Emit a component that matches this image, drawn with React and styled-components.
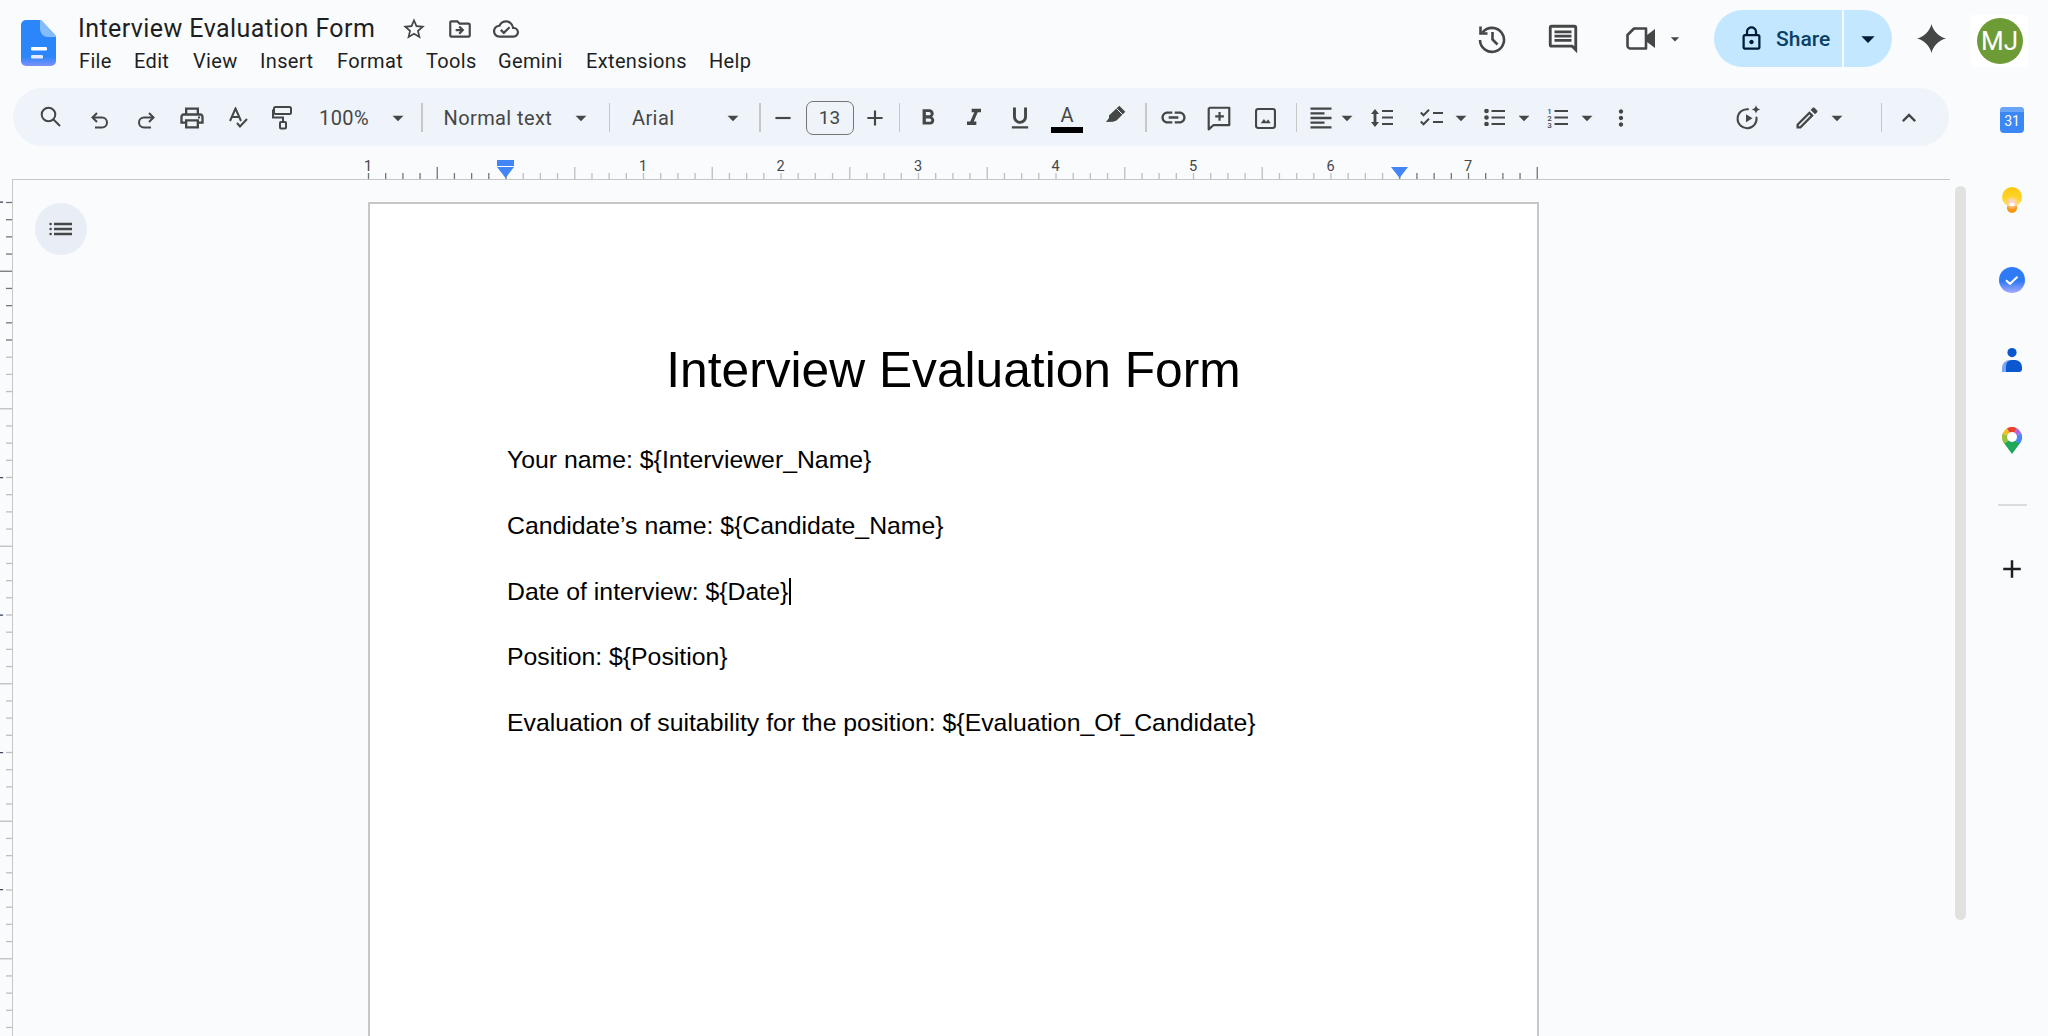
import React from "react";
import styled, { createGlobalStyle } from "styled-components";
import {
  MdOutlinePrint, MdArrowDropDown, MdRemove, MdAdd,
  MdFormatBold, MdFormatItalic, MdFormatUnderlined, MdInsertLink, MdFormatAlignLeft, MdMoreVert,
  MdOutlineEdit, MdExpandLess, MdStarBorder, MdOutlineDriveFileMove, MdOutlineCloudDone, MdOutlineLock,
} from "react-icons/md";

const Global = createGlobalStyle`
  html, body { margin: 0; padding: 0; background: #f9fbfd; height: 100%; overflow: hidden; }
  #root { height: 100%; }
  * { box-sizing: border-box; }
`;

const Shell = styled.div`
  width: 2048px; height: 1036px; overflow: hidden; background: #f9fbfd; display: flex; flex-direction: column;
  font-family: Roboto, "Liberation Sans", sans-serif; color: #1f1f1f;
`;
const Header = styled.header`
  height: 88px; flex: none; display: flex; align-items: flex-start; padding: 0 20px 0 21px;
`;
const DocLogo = styled.svg` margin-top: 20px; flex: none; `;
const TitleColumn = styled.div` margin-left: 22px; padding-top: 15px; display: flex; flex-direction: column; `;
const TitleRow = styled.div` height: 28px; display: flex; align-items: center; `;
const DocTitle = styled.div` font-size: 25px; line-height: 28px; letter-spacing: 0.42px; width: 313px; white-space: nowrap; `;
const TitleIcon = styled.span`
  width: 46px; height: 28px; display: flex; align-items: center; justify-content: center; color: #444746; font-size: 26px;
`;
const MenuBar = styled.nav` display: flex; margin-top: 5px; height: 26px; margin-left: 1px; `;
const MenuItem = styled.span` font-size: 20px; letter-spacing: 0.35px; line-height: 26px; width: ${(p) => p.$w}px; white-space: nowrap; `;
const HeaderRight = styled.div` margin-left: auto; display: flex; align-items: center; height: 77px; `;
const HeadIcon = styled.span`
  width: ${(p) => p.$w || 40}px; margin-left: ${(p) => p.$ml || 0}px; display: flex; align-items: center; justify-content: center;
  color: #444746; font-size: 34px;
`;
const Share = styled.div`
  margin-left: 29px; width: 178px; height: 57px; border-radius: 29px; background: #c2e7ff; display: flex; align-items: stretch; overflow: hidden;
`;
const ShareMain = styled.div`
  width: 130px; display: flex; align-items: center; padding-left: 24px; gap: 11px; color: #0a3f66; font-size: 21px; font-weight: 500;
  border-right: 2px solid #f4fafe; svg { color: #001d35; }
`;
const ShareCaret = styled.div` flex: 1; display: flex; align-items: center; justify-content: center; color: #001d35; font-size: 32px; `;
const AvatarBox = styled.div`
  margin: 5px 0 0 25px; width: 57px; height: 52px; background: #fff; display: flex; align-items: center; justify-content: center;
`;
const Avatar = styled.div`
  width: 46px; height: 46px; border-radius: 50%; background: #6d9c36; color: #fff; font-size: 26px;
  display: flex; align-items: center; justify-content: center;
`;
const Body = styled.div` flex: 1; display: flex; min-height: 0; `;
const Main = styled.main` width: 1950px; flex: none; display: flex; flex-direction: column; min-height: 0; `;
const Toolbar = styled.div`
  margin-left: 13px; width: 1936px; height: 58px; flex: none; border-radius: 29px; background: #eff3fa;
  display: flex; align-items: center; padding: 1px 17px 0 15px; color: #444746;
`;
const Tool = styled.span`
  flex: none; width: ${(p) => p.$w || 46}px; margin-left: ${(p) => p.$ml || 0}px; height: 40px;
  display: flex; align-items: center; justify-content: center; font-size: ${(p) => p.$s || 26}px; color: #444746;
`;
const Caret = styled(Tool)` font-size: 26px; svg { flex: none; } `;
const Glyph = styled.svg`
  flex: none; display: block; margin-top: ${(p) => p.$dy || 0}px; fill: none; stroke: #444746; stroke-width: ${(p) => p.$sw || 2}px;
`;
const Sep = styled.i`
  flex: none; display: block; width: 1.5px; height: 29px; margin-left: ${(p) => p.$ml || 0}px; background: #c7c7c7;
`;
const Label = styled.span`
  flex: none; width: ${(p) => p.$w}px; margin-left: ${(p) => p.$ml || 0}px; font-size: 20px; letter-spacing: 0.4px; color: #444746; white-space: nowrap;
`;
const SizeBox = styled.span`
  flex: none; margin-left: 1px; width: 48px; height: 34px; border: 1.5px solid #747775; border-radius: 7px;
  display: flex; align-items: center; justify-content: center; font-size: 19px; color: #444746;
`;
const ColorA = styled.span`
  flex: none; margin-left: 1px; width: 46px; height: 40px; display: flex; flex-direction: column; align-items: center; justify-content: flex-end;
  font-size: 20px; line-height: 20px; color: #444746;
  &::after { content: ""; width: 32px; height: 5.5px; background: #000; margin: 2px 0 5px; }
`;
const Spacer = styled.span` flex: 1; `;
const RulerTop = styled.svg` display: block; flex: none; `;
const Work = styled.div` flex: 1; display: flex; min-height: 0; overflow: hidden; `;
const RulerSide = styled.svg` display: block; flex: none; margin-top: 1px; `;
const Canvas = styled.div`
  flex: 1; display: flex; align-items: flex-start; border-top: 1.5px solid #c7c7c7; border-left: 1.5px solid #c7c7c7; padding-top: 22px; overflow: hidden;
`;
const OutlineBtn = styled.div`
  flex: none; margin: 1px 0 0 22px; width: 52px; height: 52px; border-radius: 50%; background: #e9eef6;
  display: flex; align-items: center; justify-content: center;
`;
const Paper = styled.article`
  flex: none; margin-left: 281px; width: 1171px; height: 900px; background: #fff; border: 2px solid #c7c7c7; padding: 137px 137px 0;
  font-family: "Liberation Sans", Arial, sans-serif; color: #000;
`;
const PaperTitle = styled.h1` margin: 0 0 28px; font-weight: 400; font-size: 49.7px; line-height: 58px; text-align: center; white-space: nowrap; `;
const Line = styled.p` margin: 0; font-size: 24.8px; line-height: 65.75px; white-space: nowrap; display: flex; align-items: center; `;
const Cursor = styled.span` display: inline-block; width: 2px; height: 27px; background: #000; margin-left: 1px; `;
const Scroll = styled.div` flex: none; margin: 98px 0 0 5px; width: 11px; height: 734px; border-radius: 6px; background: #e1e2df; `;
const Rail = styled.aside` flex: 1; display: flex; flex-direction: column; align-items: center; padding: 19px 0 0 10px; `;
const RailList = styled.div` display: flex; flex-direction: column; gap: 54px; align-items: center; `;
const RailIcon = styled.svg` display: block; `;
const RailRule = styled.hr` width: 29px; height: 1.5px; border: 0; background: #dadce0; margin: 50px 0 0; `;
const RailAdd = styled.div` margin-top: 48px; font-size: 30px; line-height: 0; color: #1f1f1f; `;

const DocIcon = () => (
  <DocLogo width="35" height="46" viewBox="0 0 35 46">
    <defs>
      <linearGradient id="dg" x1="0" y1="0" x2="0" y2="1">
        <stop offset="0.8" stopColor="#2c86fb" />
        <stop offset="1" stopColor="#7d92fa" />
      </linearGradient>
    </defs>
    <path d="M5 0H20L35 16V41a5 5 0 0 1-5 5H5a5 5 0 0 1-5-5V5a5 5 0 0 1 5-5z" fill="url(#dg)" />
    <path d="M19 0h1L35 16v1H27a8 8 0 0 1-8-8z" fill="#85bdfb" />
    <rect x="10" y="27" width="16" height="3.4" rx="1.2" fill="#fff" />
    <rect x="10" y="35" width="12" height="3.4" rx="1.2" fill="#e6e9ff" />
  </DocLogo>
);
const HistoryIcon = () => (
  <Glyph width="30" height="30" viewBox="0 0 30 30" $sw={2.6}>
    <path d="M5.5 8.5A12 12 0 1 1 3 16" />
    <path d="M3.5 2.5V9.5H10.5" />
    <path d="M15.5 8V15.5L20.5 20.5" />
  </Glyph>
);
const CommentIcon = () => (
  <svg width="34" height="34" viewBox="0 0 24 24" fill="#444746">
    <path d="M20 2H4a2 2 0 0 0-2 2v12a2 2 0 0 0 2 2h14l4 4V4a2 2 0 0 0-2-2zm0 15.2L18.8 16H4V4h16zM6 12h12v2H6zm0-3h12v2H6zm0-3h12v2H6z" />
  </svg>
);
const MeetIcon = () => (
  <svg width="30" height="23" viewBox="0 0 30 23">
    <path d="M8 1.5H20V21.5H4.5a3 3 0 0 1-3-3V8z" fill="none" stroke="#444746" strokeWidth="2.6" strokeLinejoin="round" />
    <path d="M21 8l8-6v19l-8-6z" fill="#444746" />
  </svg>
);
const Spark = () => (
  <svg width="29" height="29" viewBox="0 0 24 24" fill="#444746">
    <path d="M12 0C13.5 6 18 10.5 24 12 18 13.5 13.5 18 12 24 10.5 18 6 13.5 0 12 6 10.5 10.5 6 12 0z" />
  </svg>
);
const SearchIcon = () => (
  <Glyph width="24" height="24" viewBox="0 0 24 24" $dy={-1}>
    <circle cx="9.5" cy="9.5" r="6.8" />
    <path d="M14.5 14.5L21 21" />
  </Glyph>
);
const UndoIcon = () => (
  <Glyph width="20" height="18" viewBox="0 0 20 18" $dy={5}>
    <path d="M7 2L2.5 6.5 7 11" />
    <path d="M2.5 6.5H12a5 5 0 0 1 0 10H5" />
  </Glyph>
);
const RedoIcon = () => (
  <Glyph width="20" height="18" viewBox="0 0 20 18" $dy={5}>
    <path d="M13 2L17.5 6.5 13 11" />
    <path d="M17.5 6.5H8a5 5 0 0 0 0 10H15" />
  </Glyph>
);
const SpellIcon = () => (
  <Glyph width="19" height="21" viewBox="0 0 19 21">
    <path d="M1 14L6.5 1.5 12 14" />
    <path d="M3 10H10" />
    <path d="M8 16L11 19.5 18 12" />
  </Glyph>
);
const RollerIcon = () => (
  <Glyph width="20" height="24" viewBox="0 0 20 24">
    <rect x="2" y="1" width="17" height="7" rx="1.5" />
    <path d="M2 4.5H1V11.5H11V16" />
    <rect x="8" y="16" width="6" height="6.5" rx="1" />
  </Glyph>
);
const Highlighter = () => (
  <svg width="20" height="18" viewBox="0 0 20 18" style={{ marginTop: -8 }}>
    <path d="M13.3.7L19.3 6.7 10.5 15.5 7 16.7 0 17 3 13 3 10.5z" fill="#444746" />
    <path d="M10.5 3.5L16.5 9.5" stroke="#eff3fa" strokeWidth="1" />
  </svg>
);
const AddCommentIcon = () => (
  <Glyph width="26" height="26" viewBox="0 0 24 24">
    <path d="M3.5 2.5H21.5V18.5H7L2.5 22.5V3.5z" strokeLinejoin="round" />
    <path d="M12.5 6.5V14.5M8.5 10.5H16.5" />
  </Glyph>
);
const ImageIcon = () => (
  <Glyph width="21" height="21" viewBox="0 0 20 20" $dy={2}>
    <rect x="1" y="1" width="18" height="18" rx="2" />
    <path d="M5.5 14.5L8.5 10.5 10.5 13 12.5 11 15 14.5z" fill="#444746" stroke="none" />
  </Glyph>
);
const LineSpacingIcon = () => (
  <Glyph width="24" height="18" viewBox="0 0 24 18">
    <path d="M5 0l4 5H6.4v8H9l-4 5-4-5h2.6V5H1z" fill="#444746" stroke="none" />
    <path d="M12 2H23M12 8.5H23M12 15H23" />
  </Glyph>
);
const ChecklistIcon = () => (
  <Glyph width="23" height="18" viewBox="0 0 23 18">
    <path d="M.8 3.5L3.5 6.3 9 .8M.8 12.5L3.5 15.3 9 9.8" />
    <path d="M13 4H23M13 13H23" />
  </Glyph>
);
const BulletIcon = () => (
  <Glyph width="21" height="17" viewBox="0 0 21 17">
    <path d="M7.5 2H21M7.5 8.5H21M7.5 15H21" />
    <circle cx="2.5" cy="2" r="2.3" fill="#444746" stroke="none" />
    <circle cx="2.5" cy="8.5" r="2.3" fill="#444746" stroke="none" />
    <circle cx="2.5" cy="15" r="2.3" fill="#444746" stroke="none" />
  </Glyph>
);
const NumberIcon = () => (
  <Glyph width="21" height="21" viewBox="0 0 21 21">
    <path d="M7.5 4H21M7.5 10.5H21M7.5 17H21" />
    {[[1, 6.5], [2, 13.5], [3, 20.5]].map(([n, y]) => (
      <text key={n} x="2.5" y={y} textAnchor="middle" fontSize="8" fontFamily="Roboto" fontWeight="500" fill="#444746" stroke="none">{n}</text>
    ))}
  </Glyph>
);
const RecordIcon = () => (
  <svg width="26" height="26" viewBox="0 0 26 26" fill="none" stroke="#444746" strokeWidth="2">
    <path d="M20.5 12.5A9.5 9.5 0 1 1 12 4.2" strokeLinecap="round" />
    <path d="M10 9.2l6.5 4-6.5 4z" fill="#444746" stroke="none" />
    <path d="M20 0c.4 2.6 1.8 4 4.6 4.4C21.8 4.8 20.4 6.2 20 8.8 19.6 6.2 18.2 4.8 15.4 4.4 18.2 4 19.6 2.6 20 0z" fill="#444746" stroke="none" />
  </svg>
);
const OutlineIcon = () => (
  <Glyph width="24" height="16" viewBox="0 0 24 16" $sw={2.4}>
    <path d="M5 3H23M5 8H23M5 13H23" />
    <circle cx="1.6" cy="3" r="1.3" fill="#444746" stroke="none" />
    <circle cx="1.6" cy="8" r="1.3" fill="#444746" stroke="none" />
    <circle cx="1.6" cy="13" r="1.3" fill="#444746" stroke="none" />
  </Glyph>
);
const Calendar = () => (
  <RailIcon width="24" height="26" viewBox="0 0 24 26">
    <rect x="0" y="0" width="24" height="26" rx="4" fill="#3b87f5" />
    <path d="M0 4a4 4 0 0 1 4-4h16a4 4 0 0 1 4 4v1H0z" fill="#6aa5f8" />
    <text x="12" y="19" textAnchor="middle" fontSize="14" fontFamily="Roboto" fill="#fff">31</text>
  </RailIcon>
);
const Keep = () => (
  <RailIcon width="22" height="26" viewBox="0 0 22 26">
    <defs>
      <linearGradient id="kg" x1="0" y1="0" x2="0" y2="1"><stop offset="0" stopColor="#fdc70a" /><stop offset="1" stopColor="#ffe04a" /></linearGradient>
      <radialGradient id="kp"><stop offset="0.3" stopColor="#ffd3d8" /><stop offset="1" stopColor="#ffc9b8" stopOpacity="0" /></radialGradient>
    </defs>
    <circle cx="11" cy="10" r="10" fill="url(#kg)" />
    <path d="M6 19h10v2a5 5 0 0 1-10 0z" fill="#f59a0f" />
    <circle cx="11" cy="16" r="7" fill="url(#kp)" />
    <rect x="8.5" y="16" width="5" height="3" rx="1" fill="#fff" />
  </RailIcon>
);
const Tasks = () => (
  <RailIcon width="26" height="26" viewBox="0 0 26 26">
    <defs>
      <linearGradient id="tg" x1="0" y1="0" x2="0" y2="1"><stop offset="0.55" stopColor="#2f7bf6" /><stop offset="1" stopColor="#a9a9ff" /></linearGradient>
    </defs>
    <circle cx="13" cy="13" r="13" fill="url(#tg)" />
    <path d="M7 13.2l4 3.6 7.5-7" fill="none" stroke="#fff" strokeWidth="2" />
  </RailIcon>
);
const Contacts = () => (
  <RailIcon width="20" height="26" viewBox="0 0 20 26">
    <circle cx="10" cy="5.6" r="4.6" fill="#0b57d0" />
    <path d="M0 25v-4a8 8 0 0 1 8-8h6v12z" fill="#7aa7f5" />
    <path d="M4 25V19a6 6 0 0 1 6-6h3a7 7 0 0 1 7 7v2a3 3 0 0 1-3 3z" fill="#0b57d0" />
  </RailIcon>
);
const MapsPin = () => (
  <RailIcon width="20" height="27" viewBox="0 0 20 27">
    <path d="M1.2 15L10 27l8.8-12z" fill="#1fa85b" />
    <path d="M10 10L2.9 17.1A10 10 0 0 1 .6 6.5z" fill="#9cc23c" />
    <path d="M10 10L.6 6.5A10 10 0 0 1 5 1.3z" fill="#f6bd1b" />
    <path d="M10 10L5 1.3A10 10 0 0 1 15 1.3z" fill="#ea4335" />
    <path d="M10 10L15 1.3A10 10 0 0 1 19.4 6.5z" fill="#b065d8" />
    <path d="M10 10L19.4 6.5A10 10 0 0 1 17.1 17.1z" fill="#4a86f5" />
    <path d="M10 10L17.1 17.1 10 20 2.9 17.1z" fill="#1fa85b" />
    <circle cx="10" cy="10" r="5" fill="#fff" />
  </RailIcon>
);

const STEP = 137.5 / 8;
const topTicks = Array.from({ length: 69 }, (_, i) => i);
const TopRuler = () => (
  <RulerTop width="1950" height="33" viewBox="0 0 1950 33">
    {topTicks.map((i) => {
      const x = 368.5 + i * STEP;
      const half = i % 8 === 4;
      const inMargin = x > 510 && x < 1396;
      return <line key={i} x1={x} x2={x} y1={half ? 21 : 27} y2="33" stroke={inMargin ? "#bdbfc1" : "#70757a"} strokeWidth="1.3" />;
    })}
    {[[368, "1"], [643, "1"], [780.5, "2"], [918, "3"], [1055.5, "4"], [1193, "5"], [1330.5, "6"], [1468, "7"]].map(([x, n]) => (
      <text key={x} x={x} y="25" textAnchor="middle" fontSize="14.5" fontFamily="Roboto" fill="#444746">{n}</text>
    ))}
    <rect x="497" y="14" width="17" height="6" fill="#4285f4" />
    <path d="M497 21h17l-8.5 11z" fill="#4285f4" />
    <path d="M1391 21h17l-8.5 11z" fill="#4285f4" />
  </RulerTop>
);
const sideTicks = Array.from({ length: 50 }, (_, i) => i);
const SideRuler = () => (
  <RulerSide width="12" height="856" viewBox="0 0 12 856">
    {sideTicks.map((i) => {
      const y = 22.5 + i * STEP;
      const half = i % 8 === 4;
      return <line key={i} x1={half ? 0 : 6} x2="12" y1={y} y2={y} stroke={i <= 8 ? "#70757a" : "#bdbfc1"} strokeWidth="1.3" />;
    })}
    {[22.5, 298, 435.5, 573, 710].map((y) => (
      <text key={y} x="0" y="0" transform={`translate(3 ${y}) rotate(-90)`} textAnchor="middle" fontSize="14" fontFamily="Roboto" fill="#444746">1</text>
    ))}
  </RulerSide>
);

const menu = [["File", 55], ["Edit", 59], ["View", 67], ["Insert", 77], ["Format", 89], ["Tools", 72], ["Gemini", 88], ["Extensions", 123], ["Help", 50]];

export default function App() {
  return (
    <Shell>
      <Global />
      <Header>
        <DocIcon />
        <TitleColumn>
          <TitleRow>
            <DocTitle>Interview Evaluation Form</DocTitle>
            <TitleIcon><MdStarBorder /></TitleIcon>
            <TitleIcon><MdOutlineDriveFileMove /></TitleIcon>
            <TitleIcon><MdOutlineCloudDone /></TitleIcon>
          </TitleRow>
          <MenuBar>
            {menu.map(([m, w]) => <MenuItem key={m} $w={w}>{m}</MenuItem>)}
          </MenuBar>
        </TitleColumn>
        <HeaderRight>
          <HeadIcon><HistoryIcon /></HeadIcon>
          <HeadIcon $ml={31}><CommentIcon /></HeadIcon>
          <HeadIcon $ml={39} $w={38}><MeetIcon /></HeadIcon>
          <HeadIcon $ml={5} $w={20}><MdArrowDropDown /></HeadIcon>
          <Share>
            <ShareMain><MdOutlineLock size={27} /><span>Share</span></ShareMain>
            <ShareCaret><MdArrowDropDown /></ShareCaret>
          </Share>
          <HeadIcon $ml={25} $w={29}><Spark /></HeadIcon>
          <AvatarBox><Avatar>MJ</Avatar></AvatarBox>
        </HeaderRight>
      </Header>
      <Body>
        <Main>
          <Toolbar>
            <Tool><SearchIcon /></Tool>
            <Tool $ml={3}><UndoIcon /></Tool>
            <Tool><RedoIcon /></Tool>
            <Tool $s={28}><MdOutlinePrint /></Tool>
            <Tool><SpellIcon /></Tool>
            <Tool $w={42}><RollerIcon /></Tool>
            <Label $ml={16} $w={53}>100%</Label>
            <Caret $ml={16} $w={20}><MdArrowDropDown /></Caret>
            <Sep $ml={13} />
            <Label $ml={21} $w={110}>Normal text</Label>
            <Caret $ml={17} $w={20}><MdArrowDropDown /></Caret>
            <Sep $ml={18} />
            <Label $ml={22} $w={42}>Arial</Label>
            <Caret $ml={49} $w={20}><MdArrowDropDown /></Caret>
            <Sep $ml={16} />
            <Tool $w={44}><MdRemove /></Tool>
            <SizeBox>13</SizeBox>
            <Tool $w={42}><MdAdd /></Tool>
            <Sep $ml={3} />
            <Tool $ml={5}><MdFormatBold /></Tool>
            <Tool $s={28}><MdFormatItalic /></Tool>
            <Tool $s={28}><MdFormatUnderlined /></Tool>
            <ColorA>A</ColorA>
            <Tool $ml={3}><Highlighter /></Tool>
            <Sep $ml={6} />
            <Tool $ml={4} $s={29}><MdInsertLink /></Tool>
            <Tool $w={45}><AddCommentIcon /></Tool>
            <Tool $ml={1}><ImageIcon /></Tool>
            <Sep $ml={7} />
            <Tool $ml={4} $w={40} $s={28}><MdFormatAlignLeft /></Tool>
            <Caret $w={12}><MdArrowDropDown /></Caret>
            <Tool $ml={6}><LineSpacingIcon /></Tool>
            <Tool $ml={3}><ChecklistIcon /></Tool>
            <Caret $w={14}><MdArrowDropDown /></Caret>
            <Tool $ml={3}><BulletIcon /></Tool>
            <Caret $w={14}><MdArrowDropDown /></Caret>
            <Tool $ml={3}><NumberIcon /></Tool>
            <Caret $w={14}><MdArrowDropDown /></Caret>
            <Tool $ml={4}><MdMoreVert /></Tool>
            <Spacer />
            <Tool><RecordIcon /></Tool>
            <Tool $ml={12} $s={28}><MdOutlineEdit /></Tool>
            <Caret $w={14}><MdArrowDropDown /></Caret>
            <Sep $ml={37} />
            <Tool $ml={4} $s={28}><MdExpandLess /></Tool>
          </Toolbar>
          <TopRuler />
          <Work>
            <SideRuler />
            <Canvas>
              <OutlineBtn><OutlineIcon /></OutlineBtn>
              <Paper>
                <PaperTitle>Interview Evaluation Form</PaperTitle>
                <Line>Your name: {"${Interviewer_Name}"}</Line>
                <Line>Candidate’s name: {"${Candidate_Name}"}</Line>
                <Line>Date of interview: {"${Date}"}<Cursor /></Line>
                <Line>Position: {"${Position}"}</Line>
                <Line>Evaluation of suitability for the position: {"${Evaluation_Of_Candidate}"}</Line>
              </Paper>
            </Canvas>
          </Work>
        </Main>
        <Scroll />
        <Rail>
          <RailList>
            <Calendar />
            <Keep />
            <Tasks />
            <Contacts />
            <MapsPin />
          </RailList>
          <RailRule />
          <RailAdd><MdAdd /></RailAdd>
        </Rail>
      </Body>
    </Shell>
  );
}
